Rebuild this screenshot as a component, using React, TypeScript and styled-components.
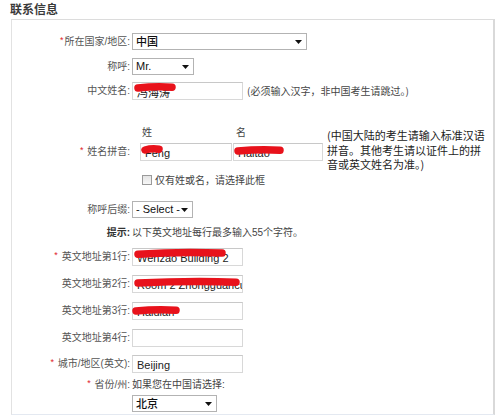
import React from "react";
import styled, { createGlobalStyle } from "styled-components";

const Global = createGlobalStyle`
  html, body { margin: 0; padding: 0; background: #fff; }
  body { font-family: "Liberation Sans", "Noto Sans CJK SC", sans-serif; color: #333; }
`;

const Page = styled.div`
  width: 502px;
  height: 417px;
  overflow: hidden;
  background: #fff;
`;

const Title = styled.h2`
  margin: 0;
  height: 19px;
  box-sizing: border-box;
  padding: 1px 0 0 10px;
  font-family: "Noto Sans CJK SC", sans-serif;
  font-size: 12px;
  line-height: 16px;
  font-weight: bold;
  color: #3a3a3a;
`;

const Panel = styled.div`
  margin-left: 11px;
  width: 484px;
  height: 396px;
  box-sizing: border-box;
  border-top: 1px solid #dcdcdc;
  border-left: 1px solid #e2e2e2;
  border-right: 2px solid #d9d9d9;
  border-bottom: 1px solid #e4e9f1;
  padding-top: 13px;
  display: flex;
  flex-direction: column;
`;

const Row = styled.div<{ $mt: number; $align?: string }>`
  display: grid;
  grid-template-columns: 118px 1fr;
  column-gap: 2px;
  align-items: ${(p) => p.$align || "center"};
  margin-top: ${(p) => p.$mt}px;
`;

const Label = styled.div<{ $bold?: boolean }>`
  text-align: right;
  font-family: "Liberation Sans", "Noto Sans CJK SC", sans-serif;
  font-size: 10px;
  line-height: 14px;
  color: ${(p) => (p.$bold ? "#333" : "#555")};
  font-weight: ${(p) => (p.$bold ? "bold" : "normal")};
  white-space: nowrap;
`;

const Req = styled.span`
  color: #e0222a;
  font-size: 9px;
  position: relative;
  top: -2px;
  margin-right: 1px;
`;

const Field = styled.div`
  display: flex;
  align-items: center;
  gap: 4px;
  min-width: 0;
`;

const FieldCol = styled.div`
  display: flex;
  flex-direction: column;
  align-items: flex-start;
  gap: 3px;
`;

const Note = styled.span`
  font-family: "Noto Sans CJK SC", sans-serif;
  font-size: 10px;
  line-height: 14px;
  color: #444;
  white-space: nowrap;
`;

const Hint = styled.span`
  font-family: "Liberation Sans", "Noto Sans CJK SC", sans-serif;
  font-size: 10px;
  line-height: 14px;
  color: #444;
  white-space: nowrap;
`;

const SelectBox = styled.div<{ $w: number }>`
  width: ${(p) => p.$w}px;
  height: 17px;
  box-sizing: border-box;
  border: 1px solid #b3b3b3;
  background: #fff;
  display: flex;
  align-items: center;
  justify-content: space-between;
  padding: 0 4px 0 3px;
  font-family: "Liberation Sans", "Noto Sans CJK SC", sans-serif;
  font-size: 11px;
  color: #111;
`;

const SelectValue = styled.span<{ $cjk?: boolean }>`
  font-family: ${(p) => (p.$cjk ? '"Noto Sans CJK SC", sans-serif' : '"Liberation Sans", sans-serif')};
  font-weight: ${(p) => (p.$cjk ? 500 : "normal")};
  font-size: 11px;
  line-height: 15px;
  color: #111;
`;

const InputWrap = styled.div`
  position: relative;
  display: inline-block;
`;

const TextInput = styled.input<{ $w: number }>`
  display: block;
  width: ${(p) => p.$w}px;
  height: 18px;
  box-sizing: border-box;
  margin: 0;
  border: 1px solid #d8d8d8;
  border-top-color: #c8c8c8;
  padding: 2px 0 0 4px;
  font-family: "Liberation Sans", "Noto Sans CJK SC", sans-serif;
  font-size: 11px;
  color: #222;
  background: #fff;
  outline: none;
`;

const ScribbleSvg = styled.svg<{ $x: number; $y: number }>`
  position: absolute;
  left: ${(p) => p.$x}px;
  top: ${(p) => p.$y}px;
  pointer-events: none;
`;

const PinyinGrid = styled.div`
  display: grid;
  grid-template-columns: 128px 93px 92px 1fr;
  grid-template-rows: 14px 22px 26px;
  margin-top: 25px;
`;

const PinyinLabel = styled(Label)`
  grid-column: 1;
  grid-row: 2;
  align-self: end;
  padding-right: 10px;
  line-height: 18px;
`;

const ColHead = styled.div<{ $col: number; $pl: number }>`
  grid-column: ${(p) => p.$col};
  grid-row: 1;
  padding-left: ${(p) => p.$pl}px;
  font-family: "Noto Sans CJK SC", sans-serif;
  font-size: 10px;
  line-height: 14px;
  color: #444;
`;

const PinyinInput = styled.div<{ $col: number }>`
  grid-column: ${(p) => p.$col};
  grid-row: 2;
  align-self: end;
`;

const CheckLine = styled.label`
  grid-column: 2 / 4;
  grid-row: 3;
  align-self: end;
  display: flex;
  align-items: center;
  gap: 3px;
  padding-left: 2px;
  font-family: "Noto Sans CJK SC", sans-serif;
  font-size: 10px;
  line-height: 14px;
  color: #444;
`;

const CheckBox = styled.span`
  width: 10px;
  height: 10px;
  box-sizing: border-box;
  border: 1px solid #9a9a9a;
  background: linear-gradient(#e4e4e4, #f7f7f7);
`;

const PinyinNote = styled.div`
  grid-column: 4;
  grid-row: 1 / 4;
  align-self: start;
  margin-top: 3px;
  padding-left: 2px;
  font-family: "Noto Sans CJK SC", sans-serif;
  font-size: 11px;
  line-height: 14.5px;
  color: #222;
  white-space: nowrap;
`;

const Caret = () => (
  <svg width="7" height="4" viewBox="0 0 7 4">
    <path d="M0 0 H7 L3.5 4 Z" fill="#111" />
  </svg>
);

const Select: React.FC<{ w: number; value: string; cjk?: boolean }> = ({ w, value, cjk }) => (
  <SelectBox $w={w}>
    <SelectValue $cjk={cjk}>{value}</SelectValue>
    <Caret />
  </SelectBox>
);

const Scribble: React.FC<{ x: number; y: number; w: number; lift?: number }> = ({ x, y, w, lift = 1 }) => {
  const h = 11;
  return (
    <ScribbleSvg $x={x} $y={y} width={w} height={h} viewBox={`0 0 ${w} ${h}`}>
      <path
        d={`M 4 ${5.5 + lift * 0.5} Q ${w / 2} ${5.5 - lift * 1.5} ${w - 4} ${5.5 - lift * 0.3}`}
        stroke="#e8121b"
        strokeWidth={7.5}
        strokeLinecap="round"
        fill="none"
      />
    </ScribbleSvg>
  );
};

const Input: React.FC<{ w: number; value?: string; scribble?: { x: number; y: number; w: number; lift?: number } }> = ({
  w,
  value,
  scribble,
}) => (
  <InputWrap>
    <TextInput $w={w} defaultValue={value} readOnly />
    {scribble && <Scribble {...scribble} />}
  </InputWrap>
);

export default function App() {
  return (
    <Page>
      <Global />
      <Title>联系信息</Title>
      <Panel>
        <Row $mt={0}>
          <Label>
            <Req>*</Req>所在国家/地区:
          </Label>
          <Field>
            <Select w={175} value="中国" cjk />
          </Field>
        </Row>
        <Row $mt={8}>
          <Label>称呼:</Label>
          <Field>
            <Select w={62} value="Mr." />
          </Field>
        </Row>
        <Row $mt={7}>
          <Label>中文姓名:</Label>
          <Field>
            <Input w={111} value="冯海涛" scribble={{ x: 2, y: 0, w: 42, lift: 1 }} />
            <Note>(必须输入汉字，非中国考生请跳过。)</Note>
          </Field>
        </Row>

        <PinyinGrid>
          <ColHead $col={2} $pl={2}>姓</ColHead>
          <ColHead $col={3} $pl={3}>名</ColHead>
          <PinyinLabel>
            <Req>*</Req> 姓名拼音:
          </PinyinLabel>
          <PinyinInput $col={2}>
            <Input w={92} value="Feng" scribble={{ x: 1, y: 1, w: 22, lift: 1 }} />
          </PinyinInput>
          <PinyinInput $col={3}>
            <Input w={90} value="Haitao" scribble={{ x: 1, y: 2, w: 50, lift: 1 }} />
          </PinyinInput>
          <CheckLine>
            <CheckBox />
            仅有姓或名，请选择此框
          </CheckLine>
          <PinyinNote>
            (中国大陆的考生请输入标准汉语
            <br />
            拼音。其他考生请以证件上的拼
            <br />
            音或英文姓名为准。)
          </PinyinNote>
        </PinyinGrid>

        <Row $mt={14}>
          <Label>称呼后缀:</Label>
          <Field>
            <Select w={61} value="- Select -" />
          </Field>
        </Row>
        <Row $mt={8}>
          <Label $bold>提示:</Label>
          <Hint>以下英文地址每行最多输入55个字符。</Hint>
        </Row>
        <Row $mt={8}>
          <Label>
            <Req>*</Req> 英文地址第1行:
          </Label>
          <Field>
            <Input w={111} value="Wenzao Building 2" scribble={{ x: 2, y: 0, w: 92, lift: 1.5 }} />
          </Field>
        </Row>
        <Row $mt={9}>
          <Label>英文地址第2行:</Label>
          <Field>
            <Input w={111} value="Room 2 Zhongguancun" scribble={{ x: 2, y: 2, w: 106, lift: 1.2 }} />
          </Field>
        </Row>
        <Row $mt={9}>
          <Label>英文地址第3行:</Label>
          <Field>
            <Input w={111} value="Haidian" scribble={{ x: 0, y: 3, w: 48, lift: 1 }} />
          </Field>
        </Row>
        <Row $mt={9}>
          <Label>英文地址第4行:</Label>
          <Field>
            <Input w={111} />
          </Field>
        </Row>
        <Row $mt={8}>
          <Label>
            <Req>*</Req> 城市/地区(英文):
          </Label>
          <Field>
            <Input w={111} value="Beijing" />
          </Field>
        </Row>
        <Row $mt={5} $align="start">
          <Label>
            <Req>*</Req> 省份/州:
          </Label>
          <FieldCol>
            <Hint>如果您在中国请选择:</Hint>
            <Select w={85} value="北京" cjk />
          </FieldCol>
        </Row>
      </Panel>
    </Page>
  );
}
